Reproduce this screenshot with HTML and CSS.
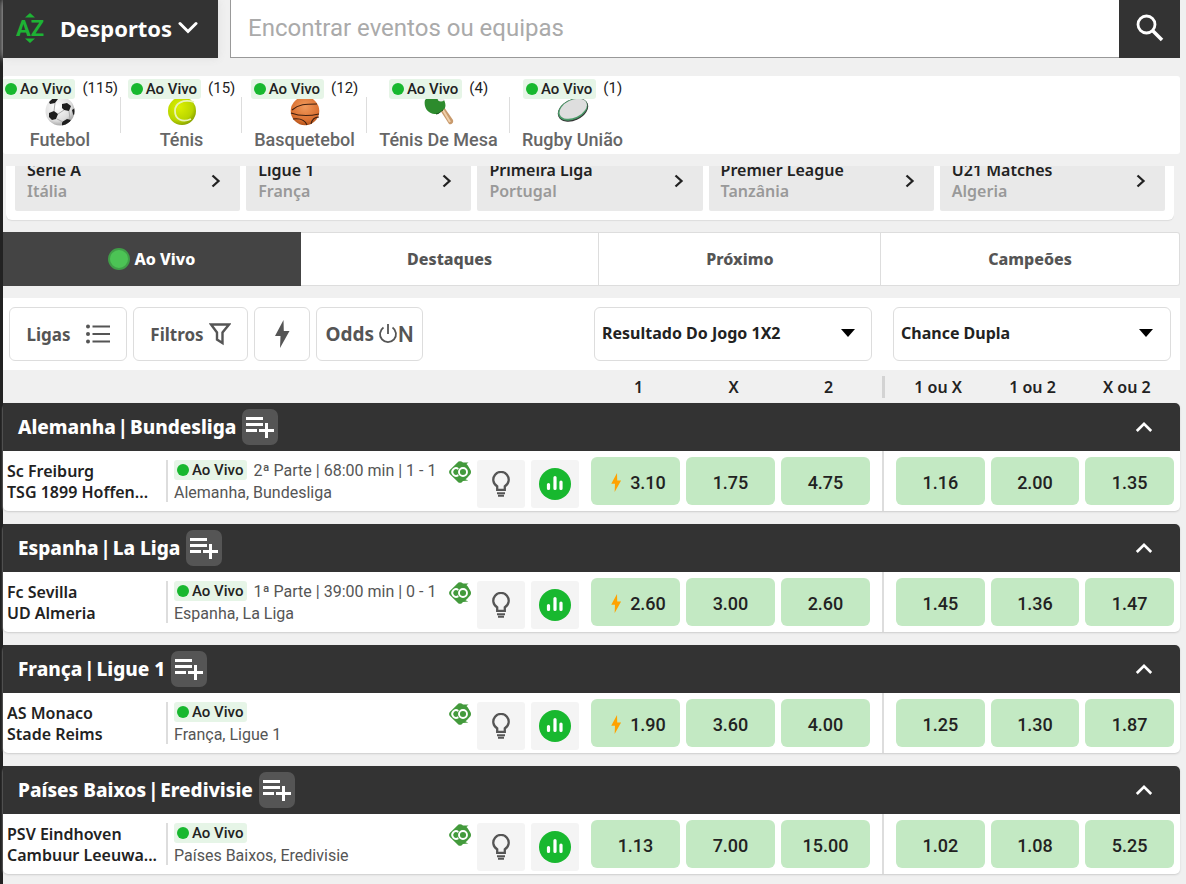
FILE: index.html
```html
<!DOCTYPE html>
<html lang="pt">
<head>
<meta charset="utf-8">
<meta name="viewport" content="width=device-width, initial-scale=1">
<title>Desportos Ao Vivo</title>
<link rel="stylesheet" href="styles.css">
</head>
<body>
<svg class="sprite" aria-hidden="true">
  <symbol id="chevron-up" viewBox="0 0 20 12"><path d="M2 10.500 10 2.500l8 8" fill="none" stroke="currentColor" stroke-width="3"/></symbol>
  <symbol id="chevron-right" viewBox="0 0 10 14"><path d="M1.500 1.500 7.500 7l-6 5.500" fill="none" stroke="currentColor" stroke-width="2.300"/></symbol>
  <symbol id="playlist-add" viewBox="0 0 30 22"><path d="M1 2.500h17M1 8.500h17M1 14.500h11M14 14.500h15M21.500 7v15" fill="none" stroke="currentColor" stroke-width="3"/></symbol>
  <symbol id="bolt" viewBox="0 0 16 28"><path d="M9.500 0 1 16h5.500L6 28 15.500 11H9.800z" fill="currentColor"/></symbol>
  <symbol id="bulb" viewBox="0 0 20 26"><path d="M6.200 15.300A7.700 7.700 0 1 1 13.800 15.300V18.800H6.200z" fill="none" stroke="currentColor" stroke-width="2.300"/><path d="M6 22.200h8M7 24.700h6" stroke="currentColor" stroke-width="2"/></symbol>
  <symbol id="stats" viewBox="0 0 32 32"><circle cx="16" cy="16" r="16" fill="#18b82f"/><path d="M9.500 16.500v4M16 9.500v11M22 14v6.500" stroke="#fff" stroke-width="3.200" stroke-linecap="round"/></symbol>
  <symbol id="cashout" viewBox="0 0 22 22"><path d="M9.500.6Q11-.3 12.500.6L14 1.500h5.500L17.500 3l1.300 1.500L21.500 9Q22.500 11 21.500 13L18 17l-1.500 1.300 2.800 1.200-5.300.4-1.500 1.500Q11 22.300 9.500 21.400L.8 13Q-.6 11 .8 9z" fill="#439a3c"/><g fill="none" stroke="#fff" stroke-width="1.900"><path d="M9.300 7.900A3.800 3.800 0 1 0 9.300 14.100"/><circle cx="14" cy="11" r="4"/></g></symbol>
</svg>

<div class="page">
  <header class="top">
    <button class="sports-menu" type="button">
      <svg class="az" viewBox="0 0 28 32" aria-hidden="true"><path d="M14 1l5 4.500H9zM14 31l5-4.500H9z" fill="#1db334"/><text x="14" y="24" text-anchor="middle">AZ</text></svg>
      <span>Desportos</span>
      <svg class="menu-arrow" viewBox="0 0 20 14" aria-hidden="true"><path d="M2 2.500 10 10.500l8-8" fill="none" stroke="currentColor" stroke-width="3" stroke-linecap="round"/></svg>
    </button>
    <form class="search" role="search">
      <input type="search" aria-label="Encontrar eventos ou equipas" placeholder="Encontrar eventos ou equipas">
      <button type="button" aria-label="Procurar"><svg viewBox="0 0 28 28"><circle cx="10.500" cy="10.500" r="8.500" fill="none" stroke="currentColor" stroke-width="2.800"/><path d="M16.500 16.500 26 26" stroke="currentColor" stroke-width="3.600"/></svg></button>
    </form>
  </header>

  <nav class="sports" aria-label="Desportos">
    <a href="#" class="sport"><span class="sport-live"><span class="live">Ao Vivo</span>(115)</span>
      <svg viewBox="0 0 30 30"><defs><radialGradient id="gf" cx=".4" cy=".35" r=".7"><stop offset="0" stop-color="#fff"/><stop offset=".7" stop-color="#ddd"/><stop offset="1" stop-color="#999"/></radialGradient><clipPath id="ball"><circle cx="15" cy="15" r="14.500"/></clipPath></defs><circle cx="15" cy="15" r="14.500" fill="url(#gf)"/><g clip-path="url(#ball)" fill="#1e1e1e"><path d="M17 8l5-1 4 3-2 5-5-1-2-2zM4 17l5-2 4 3-2 5-4 1-3-3zM4 6l4-4 5 1-3 4-5 1zM17 26l5-3 4 1-4 6h-5zM27 14l3-2v9l-2-3z"/><path d="M13 18l6-4M9 15l1-8M24 15l1 8M12 23l6 3" fill="none" stroke="#aaa"/></g></svg>
      <span class="sport-name">Futebol</span></a>
    <a href="#" class="sport"><span class="sport-live"><span class="live">Ao Vivo</span>(15)</span>
      <svg viewBox="0 0 30 30"><defs><radialGradient id="gt" cx=".4" cy=".35" r=".7"><stop offset="0" stop-color="#dcf000"/><stop offset=".7" stop-color="#b9d500"/><stop offset="1" stop-color="#829b00"/></radialGradient></defs><circle cx="15" cy="15" r="14" fill="url(#gt)"/><path d="M27 6C16 3 8 7 8 15s7 12 16 8" fill="none" stroke="#e9f3b5" stroke-width="1.800"/></svg>
      <span class="sport-name">Ténis</span></a>
    <a href="#" class="sport"><span class="sport-live"><span class="live">Ao Vivo</span>(12)</span>
      <svg viewBox="0 0 30 30"><defs><radialGradient id="gb" cx=".5" cy=".35" r=".7"><stop offset="0" stop-color="#f09a5c"/><stop offset=".7" stop-color="#db7030"/><stop offset="1" stop-color="#a84b15"/></radialGradient></defs><circle cx="15" cy="15" r="14.300" fill="url(#gb)"/><path d="M1 17c8 3 19 3 28 1M2 14C9 8 15 8 27 8M3 23c8-1 12 1 14 6M29 21c-5 0-7 2-8 7" fill="none" stroke="#402010" stroke-width="1.100"/></svg>
      <span class="sport-name">Basquetebol</span></a>
    <a href="#" class="sport"><span class="sport-live"><span class="live">Ao Vivo</span>(4)</span>
      <svg viewBox="0 0 30 30"><path d="M16 14l4-3 9 13c1 3-2 5-4 4z" fill="#c89a6d"/><path d="M19 14l7 12" stroke="#efcfaa" stroke-width="2"/><path d="M1 4C-1 12 5 19 12 18c4 0 3-2 7-4 4-2 3-10-2-13H4z" fill="#2d8b2d"/><path d="M12 18c3 0 5-3 7-4" stroke="#17511b" fill="none"/><circle cx="17" cy="2" r="3.500" fill="#eee"/></svg>
      <span class="sport-name">Ténis De Mesa</span></a>
    <a href="#" class="sport"><span class="sport-live"><span class="live">Ao Vivo</span>(1)</span>
      <svg class="wide" viewBox="0 0 34 30"><g transform="rotate(-25 17 14)"><ellipse cx="17" cy="14" rx="16" ry="10.500" fill="#333"/><ellipse cx="17" cy="13.500" rx="15.500" ry="10" fill="#4a9a68"/><ellipse cx="17.700" cy="13" rx="14.500" ry="8.800" fill="#dedede"/></g></svg>
      <span class="sport-name">Rugby União</span></a>
  </nav>

  <section class="leagues" aria-label="Ligas em destaque">
    <a href="#" class="league"><span><b>Serie A</b><small>Itália</small></span><svg><use href="#chevron-right"/></svg></a>
    <a href="#" class="league"><span><b>Ligue 1</b><small>França</small></span><svg><use href="#chevron-right"/></svg></a>
    <a href="#" class="league"><span><b>Primeira Liga</b><small>Portugal</small></span><svg><use href="#chevron-right"/></svg></a>
    <a href="#" class="league"><span><b>Premier League</b><small>Tanzânia</small></span><svg><use href="#chevron-right"/></svg></a>
    <a href="#" class="league"><span><b>U21 Matches</b><small>Algeria</small></span><svg><use href="#chevron-right"/></svg></a>
  </section>

  <nav class="tabs">
    <button type="button" class="active"><i class="pulse"></i>Ao Vivo</button>
    <button type="button">Destaques</button>
    <button type="button">Próximo</button>
    <button type="button">Campeões</button>
  </nav>

  <div class="toolbar cols">
    <div class="tools">
      <button type="button" class="tool leagues-tool">Ligas<svg width="24" height="20" viewBox="0 0 24 20"><path d="M6.500 2.500H24M6.500 10H24M6.500 17.500H24" stroke="currentColor" stroke-width="2.200"/><g fill="currentColor"><circle cx="2" cy="2.500" r="2"/><circle cx="2" cy="10" r="2"/><circle cx="2" cy="17.500" r="2"/></g></svg></button>
      <button type="button" class="tool filter-tool">Filtros<svg width="22" height="24" viewBox="0 0 22 24"><path d="M2 2.500h18l-6.500 8V21L8 17.500v-7z" fill="none" stroke="currentColor" stroke-width="2.400"/></svg></button>
      <button type="button" class="tool bolt-tool" aria-label="Odds turbinadas"><svg width="16" height="28"><use href="#bolt"/></svg></button>
      <button type="button" class="tool odds-tool">Odds<span class="on"><svg width="20" height="20" viewBox="0 0 20 20" aria-label="O"><path d="M5.500 3.500A8 8 0 1 0 14.500 3.500M10 0v10" fill="none" stroke="currentColor" stroke-width="1.800"/></svg>N</span></button>
    </div>
    <div class="picker first"><select aria-label="Mercado principal"><option>Resultado Do Jogo 1X2</option></select></div>
    <div class="picker second"><select aria-label="Segundo mercado"><option>Chance Dupla</option></select></div>
  </div>

  <div class="cols labels">
    <span></span>
    <div class="trio"><span>1</span><span>X</span><span>2</span></div>
    <div class="trio last"><span>1 ou X</span><span>1 ou 2</span><span>X ou 2</span></div>
  </div>

  <main>
    <section class="group">
      <header><h2><span>Alemanha</span> <span>|</span> <span>Bundesliga</span></h2><button type="button" class="add" aria-label="Adicionar"><svg><use href="#playlist-add"/></svg></button><button type="button" class="fold" aria-label="Recolher"><svg><use href="#chevron-up"/></svg></button></header>
      <div class="cols match">
        <div class="event">
          <div class="teams">Sc Freiburg<br>TSG 1899 Hoffen...</div>
          <div class="info"><p><span class="live">Ao Vivo</span>2ª Parte | 68:00 min | 1 - 1</p><p>Alemanha, Bundesliga</p></div>
          <svg class="cash"><use href="#cashout"/></svg>
          <button type="button" class="square" aria-label="Dicas"><svg class="bulb"><use href="#bulb"/></svg></button>
          <button type="button" class="square" aria-label="Estatísticas"><svg class="stat"><use href="#stats"/></svg></button>
        </div>
        <div class="trio"><button type="button"><svg><use href="#bolt"/></svg>3.10</button><button type="button">1.75</button><button type="button">4.75</button></div>
        <div class="trio last"><button type="button">1.16</button><button type="button">2.00</button><button type="button">1.35</button></div>
      </div>
    </section>

    <section class="group">
      <header><h2><span>Espanha</span> <span>|</span> <span>La Liga</span></h2><button type="button" class="add" aria-label="Adicionar"><svg><use href="#playlist-add"/></svg></button><button type="button" class="fold" aria-label="Recolher"><svg><use href="#chevron-up"/></svg></button></header>
      <div class="cols match">
        <div class="event">
          <div class="teams">Fc Sevilla<br>UD Almeria</div>
          <div class="info"><p><span class="live">Ao Vivo</span>1ª Parte | 39:00 min | 0 - 1</p><p>Espanha, La Liga</p></div>
          <svg class="cash"><use href="#cashout"/></svg>
          <button type="button" class="square" aria-label="Dicas"><svg class="bulb"><use href="#bulb"/></svg></button>
          <button type="button" class="square" aria-label="Estatísticas"><svg class="stat"><use href="#stats"/></svg></button>
        </div>
        <div class="trio"><button type="button"><svg><use href="#bolt"/></svg>2.60</button><button type="button">3.00</button><button type="button">2.60</button></div>
        <div class="trio last"><button type="button">1.45</button><button type="button">1.36</button><button type="button">1.47</button></div>
      </div>
    </section>

    <section class="group">
      <header><h2><span>França</span> <span>|</span> <span>Ligue 1</span></h2><button type="button" class="add" aria-label="Adicionar"><svg><use href="#playlist-add"/></svg></button><button type="button" class="fold" aria-label="Recolher"><svg><use href="#chevron-up"/></svg></button></header>
      <div class="cols match">
        <div class="event">
          <div class="teams">AS Monaco<br>Stade Reims</div>
          <div class="info"><p><span class="live">Ao Vivo</span></p><p>França, Ligue 1</p></div>
          <svg class="cash"><use href="#cashout"/></svg>
          <button type="button" class="square" aria-label="Dicas"><svg class="bulb"><use href="#bulb"/></svg></button>
          <button type="button" class="square" aria-label="Estatísticas"><svg class="stat"><use href="#stats"/></svg></button>
        </div>
        <div class="trio"><button type="button"><svg><use href="#bolt"/></svg>1.90</button><button type="button">3.60</button><button type="button">4.00</button></div>
        <div class="trio last"><button type="button">1.25</button><button type="button">1.30</button><button type="button">1.87</button></div>
      </div>
    </section>

    <section class="group">
      <header><h2><span>Países Baixos</span> <span>|</span> <span>Eredivisie</span></h2><button type="button" class="add" aria-label="Adicionar"><svg><use href="#playlist-add"/></svg></button><button type="button" class="fold" aria-label="Recolher"><svg><use href="#chevron-up"/></svg></button></header>
      <div class="cols match">
        <div class="event">
          <div class="teams">PSV Eindhoven<br>Cambuur Leeuwa...</div>
          <div class="info"><p><span class="live">Ao Vivo</span></p><p>Países Baixos, Eredivisie</p></div>
          <svg class="cash"><use href="#cashout"/></svg>
          <button type="button" class="square" aria-label="Dicas"><svg class="bulb"><use href="#bulb"/></svg></button>
          <button type="button" class="square" aria-label="Estatísticas"><svg class="stat"><use href="#stats"/></svg></button>
        </div>
        <div class="trio"><button type="button">1.13</button><button type="button">7.00</button><button type="button">15.00</button></div>
        <div class="trio last"><button type="button">1.02</button><button type="button">1.08</button><button type="button">5.25</button></div>
      </div>
    </section>
  </main>
</div>
</body>
</html>
```
FILE: styles.css
```css
* { box-sizing: border-box; }
body {
  margin: 0;
  background: #f0f0f0;
  color: #222;
  font-family: "Noto Sans", sans-serif;
  font-size: 16px;
}
button, input, select { font: inherit; color: inherit; border: 0; margin: 0; padding: 0; background: none; }
a { color: inherit; text-decoration: none; }
p, h2 { margin: 0; }
svg { display: block; flex: none; }
.sprite { position: absolute; width: 0; height: 0; }
.page { min-height: 100vh; border-left: 3px solid #222; padding-right: 6px; }

.top { display: flex; gap: 12px; height: 58px; }
.sports-menu {
  display: flex; align-items: center;
  flex: none;
  width: 215px;
  padding: 0 0 2px 13px;
  background: #333;
  color: #fff;
  font-size: 22px;
  font-weight: 700;
  box-shadow: 0 0 8px #ddd;
}
.az { width: 28px; height: 32px; margin-right: 16px; }
.az text { fill: #1db334; font: 700 22px Roboto, sans-serif; }
.menu-arrow { width: 20px; height: 14px; margin-left: 6px; }
.search { display: flex; flex: 1; }
.search input {
  flex: 1;
  min-width: 0;
  padding: 0 17px 2px;
  border-left: 1px solid #999;
  border-bottom: 1px solid #999;
  background: #fff;
  font-family: Roboto, sans-serif;
  font-size: 24px;
  appearance: none;
  border-radius: 0;
}
.search input::placeholder { color: #aaa; }
.search button { display: grid; place-items: center; width: 61px; padding-bottom: 2px; background: #333; color: #fff; }
.search svg { width: 28px; height: 28px; }

.live {
  display: inline-flex; align-items: center; gap: 3px;
  height: 20px;
  padding: 0 4px 0 3px;
  border-radius: 3px;
  background: #e6f5e7;
  color: #222;
  font: 500 15px/20px Roboto, sans-serif;
}
.live::before { content: ""; width: 12px; height: 12px; border-radius: 50%; background: #18b82f; }

.sports {
  display: grid;
  grid-template-columns: 118px 121px 125px 143px 125px;
  height: 78px;
  margin-top: 18px;
  border-radius: 3px;
  background: #fff;
  overflow: hidden;
  font-family: Roboto, sans-serif;
}
.sport {
  display: flex; flex-direction: column; align-items: center;
  padding-top: 3px;
  background: linear-gradient(#ddd, #ddd) right 21px / 1px 36px no-repeat;
}
.sport:first-child { padding-right: 4px; }
.sport:last-child { background: none; }
.sport-live { display: flex; gap: 7px; position: relative; font-size: 15px; line-height: 18px; white-space: nowrap; }
.sport svg { width: 30px; height: 30px; margin-top: -3px; }
.sport svg.wide { width: 34px; }
.sport-name { font-size: 18px; line-height: 22px; font-weight: 500; color: #666; white-space: nowrap; margin-top: 3px; }

.leagues {
  display: grid;
  grid-template-columns: repeat(5, minmax(0, 1fr));
  grid-template-rows: 45px;
  align-items: end;
  gap: 6px;
  margin: 12px 6px 0 3px;
  padding: 0 9px 9px;
  border-radius: 0 0 6px 6px;
  background: #fff;
  box-shadow: 0 1px 1px #ddd;
  clip-path: inset(0 0 -4px 0);
}
.league {
  display: flex; align-items: center; justify-content: space-between;
  height: 60px;
  padding: 0 19px 0 12px;
  border-radius: 2px;
  background: #e9e9e9;
}
.league b, .league small { display: block; font-size: 16px; line-height: 21px; font-weight: 600; }
.league small { color: #999; }
.league svg { width: 10px; height: 14px; }

.tabs {
  display: grid;
  grid-template-columns: 298fr 299fr 282fr 298fr;
  height: 54px;
  margin-top: 12px;
  border: 1px solid #ddd;
  border-left: 0;
  border-radius: 0 3px 3px 0;
  background: #fff;
}
.tabs button {
  display: flex; align-items: center; justify-content: center; gap: 4px;
  border-right: 1px solid #ddd;
  color: #555;
  font-weight: 800;
}
.tabs button:last-child { border-right: 0; }
.tabs .active { margin: -1px 0; border: 0; background: #444; color: #fff; }
.pulse { width: 22px; height: 22px; border: 2px solid #409e48; border-radius: 50%; background: #4cc355; }

.cols { display: grid; grid-template-columns: minmax(0, 582fr) minmax(0, 297fr) minmax(0, 298fr); }
.toolbar { margin-top: 12px; padding: 9px 0; background: #fff; }
.tools { display: flex; gap: 6px; padding-left: 6px; }
.tool {
  display: flex; align-items: center; justify-content: center;
  height: 54px;
  border: 1px solid #ddd;
  border-radius: 6px;
  color: #555;
  font-size: 17px;
  font-weight: 700;
}
.leagues-tool { width: 118px; gap: 15px; }
.filter-tool { width: 115px; gap: 5px; }
.bolt-tool { width: 56px; }
.odds-tool { width: 107px; gap: 4px; font-size: 19px; }
.on { display: flex; align-items: center; font-family: Roboto, sans-serif; font-size: 22px; font-weight: 500; }
.picker { position: relative; }
.picker.first { padding: 0 10px 0 9px; }
.picker.second { padding: 0 9px 0 11px; }
.picker select {
  width: 100%;
  height: 54px;
  padding: 0 7px 2px;
  border: 1px solid #ddd;
  border-radius: 6px;
  background: #fff;
  font-weight: 700;
  appearance: none;
}
.picker::after {
  content: "";
  position: absolute;
  top: 22px;
  right: 27px;
  border: 7px solid transparent;
  border-top: 8px solid #000;
  border-bottom: 0;
  pointer-events: none;
}

.trio { display: grid; grid-template-columns: repeat(3, minmax(0, 1fr)); gap: 6px; padding: 6px 12px 6px 6px; }
.trio.last { padding: 6px 6px 6px 12px; border-left: 2px solid #ddd; }
.labels { height: 33px; padding: 6px 0; text-align: center; font-size: 16px; line-height: 22px; font-weight: 600; }
.labels .trio { padding: 0 9px; }
.labels .trio.last { border-left: 3px solid #d3d3d3; padding: 0 9px; }

.group { margin-bottom: 13px; border-radius: 5px; background: #fff; box-shadow: 0 1px 2px #ccc; }
.group header {
  display: flex; align-items: center; gap: 6px;
  height: 48px;
  padding: 0 27px 0 15px;
  border-radius: 0 5px 0 0;
  background: #333;
  color: #fff;
}
.group h2 { display: flex; gap: 2px; font-size: 19px; line-height: 24px; font-weight: 800; }
.add { display: grid; place-items: center; width: 36px; height: 36px; border-radius: 7px; background: #555; }
.add svg { width: 30px; height: 22px; }
.fold { margin-left: auto; }
.fold svg { width: 18px; height: 12px; }

.match { height: 60px; }
.event { display: flex; align-items: flex-start; gap: 6px; padding: 9px 6px 0 4px; }
.teams {
  flex: none;
  width: 155px;
  overflow: hidden;
  padding-top: 1px;
  line-height: 21px;
  font-weight: 600;
  white-space: nowrap;
}
.info {
  flex: 1;
  min-width: 0;
  margin-left: -2px;
  padding-left: 6px;
  border-left: 2px solid #ddd;
  font: 400 16px/21px Roboto, sans-serif;
  color: #555;
  white-space: nowrap;
}
.info p { display: flex; gap: 6px; height: 21px; }
.info p + p { line-height: 24px; }
.cash { width: 22px; height: 22px; margin: 1px 0; }
.square { display: grid; place-items: center; flex: none; width: 48px; height: 48px; border-radius: 3px; background: #f4f4f4; color: #555; }
.bulb { width: 20px; height: 26px; }
.stat { width: 32px; height: 32px; }
.match .trio button {
  display: flex; align-items: center; justify-content: center; gap: 8px;
  height: 48px;
  padding-top: 3px;
  border-radius: 6px;
  background: #c3e9c3;
  font: 500 18px/20px Roboto, sans-serif;
}
.match .trio svg { width: 12px; height: 19px; margin-left: 5px; color: #ffa200; }
```
